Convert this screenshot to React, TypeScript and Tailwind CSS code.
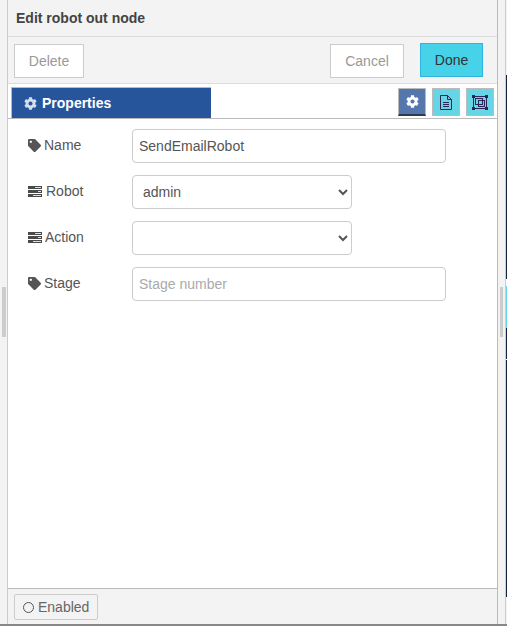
import { FaCog, FaTag } from "react-icons/fa"

function RowsIcon() {
    return (
        <svg width="14" height="11" viewBox="0 0 14 11" className="shrink-0">
            <rect x="0" y="0" width="14" height="3" fill="#4a4a4a" />
            <rect x="0" y="4" width="14" height="3" fill="#4a4a4a" />
            <rect x="0" y="8" width="14" height="3" fill="#4a4a4a" />
            <rect x="7" y="1" width="6" height="1" fill="#ddd" />
            <rect x="10" y="5" width="3" height="1" fill="#ddd" />
            <rect x="5" y="9" width="8" height="1" fill="#ddd" />
        </svg>
    )
}

function FileIcon() {
    return (
        <svg width="12" height="15" viewBox="0 0 12 15" fill="none" stroke="#2c2558">
            <path d="M0.5 0.5H7.5L11.5 4.5V14.5H0.5Z" />
            <path d="M7.5 0.5V4.5H11.5" />
            <path d="M3 7.5H9M3 9.5H9M3 11.5H9" />
        </svg>
    )
}

function FrameIcon() {
    return (
        <svg width="16" height="15" viewBox="0 0 16 15" fill="none" stroke="#2c2558">
            <rect x="1.5" y="1.5" width="13" height="12" />
            <rect x="3.5" y="3.5" width="7" height="6" />
            <rect x="6.5" y="5.5" width="6" height="6" />
            <rect x="0.5" y="0.5" width="2" height="2" fill="#2c2558" />
            <rect x="13.5" y="0.5" width="2" height="2" fill="#2c2558" />
            <rect x="0.5" y="12.5" width="2" height="2" fill="#2c2558" />
            <rect x="13.5" y="12.5" width="2" height="2" fill="#2c2558" />
        </svg>
    )
}

function Label({ icon, text, gap }: { icon: "tag" | "rows"; text: string; gap: string }) {
    return (
        <div className={`w-[104px] shrink-0 flex items-center pb-[2px] ${gap} text-[14px] text-[#555]`}>
            {icon === "tag" ? <FaTag className="text-[#555] text-[13px] shrink-0" /> : <RowsIcon />}
            <span>{text}</span>
        </div>
    )
}

const fieldClass = "h-[34px] border border-[#ccc] rounded bg-white text-[14px] text-[#555] outline-none"

export default function App() {
    return (
        <div className="w-[507px] h-[626px] flex flex-col bg-[#f3f3f3] font-['Liberation_Sans',Arial,sans-serif] overflow-hidden">
            <div className="flex grow min-h-0">
                {/* left gutter */}
                <div className="w-[8px] shrink-0 border-r border-[#ccc] flex items-center pl-[2px]">
                    <div className="w-[4px] h-[50px] bg-[#ccc]" />
                </div>

                {/* panel */}
                <div className="w-[490px] shrink-0 border-r border-[#bbb] flex flex-col">
                    <div className="h-[37px] shrink-0 border-b border-[#ddd] flex items-center pl-[8px] text-[14px] font-bold text-[#444]">
                        Edit robot out node
                    </div>

                    <div className="h-[47px] shrink-0 border-b border-[#ddd] flex items-start pt-[6px] pl-[6px] pr-[14px] text-[14px]">
                        <button className="mt-[1px] w-[70px] h-[34px] bg-white border border-[#ccc] text-[#999]">Delete</button>
                        <button className="ml-auto mt-[1px] w-[74px] h-[34px] bg-white border border-[#ccc] text-[#999]">Cancel</button>
                        <button className="ml-[16px] w-[63px] h-[34px] bg-[#46d2e8] border border-[#2fb4e0] text-[#333]">Done</button>
                    </div>

                    <div className="h-[35px] shrink-0 bg-white border-b border-[#bbb] flex items-end pl-[3px] pr-[3px]">
                        <div className="w-[200px] h-[31px] bg-[#27559b] border-t border-l border-[#bbb] flex items-center pl-[12px] gap-[5px] text-[14px] font-bold text-white">
                            <FaCog className="text-[13px] text-[#d5deeb]" />
                            Properties
                        </div>
                        <div className="ml-auto flex gap-[6px] self-start pt-[4px]">
                            <div className="w-[28px] h-[28px] bg-[#5577ab] border border-[#bbb] border-b-2 border-b-[#2f3b50] flex items-center justify-center">
                                <FaCog className="text-[13px] text-white" />
                            </div>
                            <div className="w-[28px] h-[28px] bg-[#66d6e6] border border-[#bbb] flex items-center justify-center">
                                <FileIcon />
                            </div>
                            <div className="w-[28px] h-[28px] bg-[#66d6e6] border border-[#bbb] flex items-center justify-center">
                                <FrameIcon />
                            </div>
                        </div>
                    </div>

                    <div className="grow bg-white pt-[10px] pl-[20px] flex flex-col gap-[12px]">
                        <div className="flex items-center">
                            <Label icon="tag" text="Name" gap="gap-[3px]" />
                            <input className={`${fieldClass} w-[314px] px-[6px]`} defaultValue="SendEmailRobot" />
                        </div>
                        <div className="flex items-center">
                            <Label icon="rows" text="Robot" gap="gap-[4px]" />
                            <select className={`${fieldClass} w-[220px] px-[6px]`} defaultValue="admin">
                                <option value="admin">admin</option>
                            </select>
                        </div>
                        <div className="flex items-center">
                            <Label icon="rows" text="Action" gap="gap-[3px]" />
                            <select className={`${fieldClass} w-[220px] px-[6px]`} defaultValue="">
                                <option value=""></option>
                            </select>
                        </div>
                        <div className="flex items-center">
                            <Label icon="tag" text="Stage" gap="gap-[3px]" />
                            <input className={`${fieldClass} w-[314px] px-[6px] placeholder:text-[#aaa]`} placeholder="Stage number" />
                        </div>
                    </div>

                    <div className="h-[36px] shrink-0 border-t border-[#bbb] flex items-start pt-[5px] pl-[6px]">
                        <div className="w-[84px] h-[26px] border border-[#ccc] rounded-[2px] flex items-center pl-[8px] gap-[4px] text-[14px] text-[#666]">
                            <span className="w-[11px] h-[11px] rounded-full border border-[#555]" />
                            Enabled
                        </div>
                    </div>
                </div>

                {/* right gutter with the workspace showing behind it */}
                <div className="flex grow min-w-0">
                    <div className="w-[8px] shrink-0 border-r border-[#ccc] flex items-center pl-[2px]">
                        <div className="w-[3px] h-[50px] bg-[#ccc]" />
                    </div>
                    <div className="w-[1px] flex flex-col">
                        <div className="h-[75px] shrink-0" />
                        <div className="h-[204px] shrink-0 bg-[#14233f]" />
                        <div className="h-[7px] shrink-0 bg-white" />
                        <div className="h-[42px] shrink-0 bg-[#66d6e6]" />
                        <div className="h-[31px] shrink-0 bg-[#14233f]" />
                        <div className="h-[1px] shrink-0 bg-white" />
                        <div className="h-[237px] shrink-0 bg-[#14233f]" />
                    </div>
                </div>
            </div>
            <div className="h-[2px] shrink-0 bg-[#888]" />
        </div>
    )
}
